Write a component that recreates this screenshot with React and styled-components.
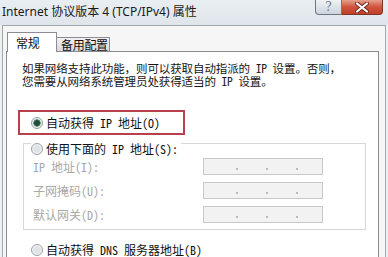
import React from "react";
import styled, { createGlobalStyle } from "styled-components";

const GlobalStyle = createGlobalStyle`
  html, body {
    margin: 0;
    padding: 0;
    background: #ffffff;
  }
`;

const ipRows = [
  { label: "IP 地址(I):" },
  { label: "子网掩码(U):" },
  { label: "默认网关(D):" },
];

const App = () => {
  return (
    <>
      <GlobalStyle />
      <Window>
        <TitleBar>
          <Title>Internet 协议版本 4 (TCP/IPv4) 属性</Title>
          <Caption>
            <HelpButton>?</HelpButton>
            <CloseButton>
              <svg width="14" height="11" viewBox="0 0 14 11">
                <path
                  d="M2 1.5 L12 9.5 M12 1.5 L2 9.5"
                  stroke="#6b2a1e"
                  strokeWidth="4"
                  strokeLinecap="round"
                />
                <path
                  d="M2 1.5 L12 9.5 M12 1.5 L2 9.5"
                  stroke="#ffffff"
                  strokeWidth="2.2"
                  strokeLinecap="round"
                />
              </svg>
            </CloseButton>
          </Caption>
        </TitleBar>

        <Client>
          <TabRow>
            <Tab active>常规</Tab>
            <Tab>备用配置</Tab>
          </TabRow>

          <Panel>
            <Intro>
              <IntroLine>如果网络支持此功能，则可以获取自动指派的 IP 设置。否则，</IntroLine>
              <IntroLine>您需要从网络系统管理员处获得适当的 IP 设置。</IntroLine>
            </Intro>

            <Highlight>
              <RadioRow>
                <Radio checked />
                <span>自动获得 IP 地址(O)</span>
              </RadioRow>
            </Highlight>

            <GroupBox>
              <Legend>
                <RadioRow>
                  <Radio />
                  <span>使用下面的 IP 地址(S):</span>
                </RadioRow>
              </Legend>
              <FieldGrid>
                {ipRows.map((row) => (
                  <React.Fragment key={row.label}>
                    <FieldLabel>{row.label}</FieldLabel>
                    <IpBox>
                      <Dot />
                      <Dot />
                      <Dot />
                    </IpBox>
                  </React.Fragment>
                ))}
              </FieldGrid>
            </GroupBox>

            <DnsRow>
              <Radio />
              <span>自动获得 DNS 服务器地址(B)</span>
            </DnsRow>
          </Panel>
        </Client>
      </Window>
    </>
  );
};

const Window = styled.div`
  width: 388px;
  height: 257px;
  overflow: hidden;
  display: flex;
  flex-direction: column;
  background: #eef1f4;
  font-family: "Noto Sans Mono CJK SC", "Noto Sans CJK SC", sans-serif;
  color: #111;
`;

const TitleBar = styled.div`
  height: 25px;
  flex: none;
  display: flex;
  align-items: flex-start;
  background: linear-gradient(#e9eef2, #dfe5ea);
`;

const Title = styled.div`
  padding: 4px 0 0 2px;
  font-family: "Noto Sans", "Noto Sans CJK SC", sans-serif;
  font-size: 12px;
  line-height: 16px;
  color: #1a1a1a;
  white-space: nowrap;
`;

const Caption = styled.div`
  margin-left: auto;
  margin-right: 5px;
  display: flex;
`;

const HelpButton = styled.div`
  width: 27px;
  height: 15px;
  box-sizing: border-box;
  border: 1px solid #6d7682;
  border-top: none;
  border-radius: 0 0 0 4px;
  background: linear-gradient(#eef2f5, #cdd5dc);
  color: #6c7c8e;
  font-family: "DejaVu Serif", serif;
  font-size: 12px;
  line-height: 14px;
  text-align: center;
`;

const CloseButton = styled.div`
  width: 41px;
  height: 15px;
  box-sizing: border-box;
  border: 1px solid #7a3528;
  border-left: none;
  border-top: none;
  border-radius: 0 0 4px 0;
  background: linear-gradient(#e6a08e, #d0533c 50%, #c0402a);
  display: flex;
  align-items: center;
  justify-content: center;
`;

const Client = styled.div`
  flex: 1;
  margin: 0 2px;
  border: 1px solid #a3a7ac;
  border-bottom: none;
  background: #f6f6f6;
  padding: 0 6px 0 3px;
  display: flex;
  flex-direction: column;
`;

const TabRow = styled.div`
  height: 25px;
  flex: none;
  display: flex;
  align-items: flex-end;
  padding-left: 1px;
`;

const Tab = styled.div`
  position: relative;
  box-sizing: border-box;
  border: 1px solid #898c95;
  border-bottom: none;
  font-size: 12px;
  line-height: 12px;
  letter-spacing: -0.3px;
  white-space: nowrap;
  height: ${({ active }) => (active ? "20px" : "14px")};
  padding: ${({ active }) => (active ? "4px 17px 0 8px" : "1px 0 0 4px")};
  width: ${({ active }) => (active ? "50px" : "54px")};
  margin-bottom: ${({ active }) => (active ? "-1px" : "0")};
  margin-left: ${({ active }) => (active ? "0" : "-1px")};
  background: ${({ active }) =>
    active ? "#ffffff" : "linear-gradient(#f2f2f2, #d9d9d9)"};
  z-index: ${({ active }) => (active ? 1 : 0)};
`;

const Panel = styled.div`
  flex: 1;
  border: 1px solid #898c95;
  border-bottom: none;
  background: #ffffff;
  padding: 10px 0 0 0;
  font-size: 12px;
  line-height: 12px;
`;

const Intro = styled.div`
  padding-left: 15px;
  display: flex;
  flex-direction: column;
  color: #151515;
`;

const IntroLine = styled.div`
  height: 12px;
  line-height: 12px;
  font-size: 11.5px;
  letter-spacing: -0.1px;
  white-space: nowrap;
  & + & {
    margin-top: 1px;
  }
`;

const Highlight = styled.div`
  margin: 23px 0 0 11px;
  width: 167px;
  height: 25px;
  box-sizing: border-box;
  border: 2px solid #b7404c;
  padding-left: 11px;
  display: flex;
  align-items: center;
`;

const RadioRow = styled.div`
  display: flex;
  align-items: center;
  gap: 3px;
  white-space: nowrap;
  height: 14px;
`;

const Radio = styled.span`
  width: 12px;
  height: 12px;
  box-sizing: border-box;
  border-radius: 50%;
  border: 1px solid #9aa0a4;
  background: ${({ checked }) =>
    checked
      ? "radial-gradient(circle, #1f4f3c 0 2.5px, #6b9a86 3.5px, #e7ecec 4px)"
      : "radial-gradient(circle, #dfe3e5 0 3px, #f4f6f7 5px)"};
  flex: none;
`;

const GroupBox = styled.div`
  margin: 8px 0 0 16px;
  width: 343px;
  box-sizing: border-box;
  border: 1px solid #d6d9dc;
  padding: 0 0 6px 9px;
`;

const Legend = styled.div`
  margin: -7px 0 0 -2px;
  display: inline-block;
  background: #ffffff;
  padding-right: 3px;
`;

const FieldGrid = styled.div`
  margin-top: 2px;
  display: grid;
  grid-template-columns: 170px 120px;
  row-gap: 7px;
  align-items: center;
`;

const FieldLabel = styled.div`
  color: #a8a8a8;
  white-space: nowrap;
`;

const IpBox = styled.div`
  height: 17px;
  box-sizing: border-box;
  border: 1px solid #c9c9c9;
  background: #f2f2f2;
  display: flex;
  align-items: center;
  padding-left: 32px;
  gap: 28px;
`;

const Dot = styled.span`
  width: 2px;
  height: 2px;
  margin-top: 5px;
  background: #a8a8a8;
  border-radius: 50%;
`;

const DnsRow = styled(RadioRow)`
  margin: 13px 0 0 24px;
`;

export default App;
